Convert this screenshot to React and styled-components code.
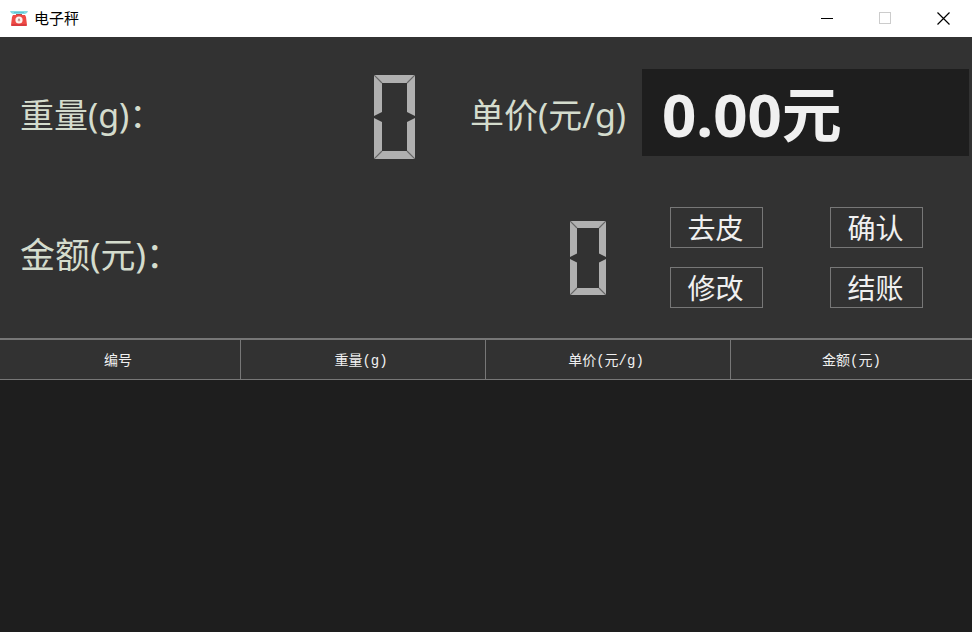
import React from "react";
import styled, { createGlobalStyle } from "styled-components";

const headers = ["编号", "重量(g)", "单价(元/g)", "金额(元)"];

function ScaleIcon() {
  return (
    <svg width="18" height="16" viewBox="0 0 18 16" aria-hidden="true">
      <path d="M0 0h18l-1 2-2 1H3L1 2z" fill="#86dbe4" />
      <path d="M4 1h10v1H4z" fill="#5fc3d2" />
      <path d="M6 3h6v1H6z" fill="#b9474b" />
      <path d="M3 4h12l1 2 1 8q0 1-1 1H2q-1 0-1-1l1-8z" fill="#ee4a45" />
      <path d="M2 13h14l.5 2h-15z" fill="#d93b3e" />
      <circle cx="9" cy="9" r="3.6" fill="#fdf3ef" />
      <circle cx="9" cy="9.3" r="1.2" fill="#e0b0a8" />
      <path d="M9 9.5V7.5" stroke="#7d5a58" strokeWidth="0.8" />
    </svg>
  );
}

// seven segment zero, w/h is the outer size and t the segment thickness
function Zero({ w, h, t }) {
  const mid = h / 2;
  const r = w - t;
  const b = h - t;
  const n = t / 2;
  return (
    <svg width={w} height={h} viewBox={`0 0 ${w} ${h}`} role="img" aria-label="0">
      <g fill="#b0b0b0">
        <path d={`M0 0H${w}L${r} ${t}H${t}Z`} />
        <path d={`M0 ${h}H${w}L${r} ${b}H${t}Z`} />
        <path d={`M0 0L${t} ${t}V${mid - n - 1}L0 ${mid - 1}Z`} />
        <path d={`M0 ${h}L${t} ${b}V${mid + n + 1}L0 ${mid + 1}Z`} />
        <path d={`M${w} 0L${r} ${t}V${mid - n - 1}L${w} ${mid - 1}Z`} />
        <path d={`M${w} ${h}L${r} ${b}V${mid + n + 1}L${w} ${mid + 1}Z`} />
      </g>
      <path
        d={`M0 0L${t} ${t}M${w} 0L${r} ${t}M0 ${h}L${t} ${b}M${w} ${h}L${r} ${b}`}
        stroke="#666"
        strokeWidth="1.2"
      />
    </svg>
  );
}

function App() {
  const [price, setPrice] = React.useState("0.00元");

  return (
    <Window>
      <GlobalStyle />
      <TitleBar>
        <ScaleIcon />
        <Title>电子秤</Title>
        <WindowButton aria-label="最小化">
          <svg width="13" height="13" shapeRendering="crispEdges">
            <path d="M0 6h12v1H0z" fill="#000" />
          </svg>
        </WindowButton>
        <WindowButton aria-label="最大化" disabled>
          <svg width="13" height="13">
            <rect x="0.5" y="0.5" width="11" height="11" fill="none" stroke="#ccc" />
          </svg>
        </WindowButton>
        <WindowButton aria-label="关闭">
          <svg width="13" height="13">
            <path d="M0.5 0.5l12 12M12.5 0.5l-12 12" stroke="#000" strokeWidth="1.2" />
          </svg>
        </WindowButton>
      </TitleBar>

      <Panel>
        <WeightRow>
          <Label>重量(g)：</Label>
          <Readout>
            <Zero w={41} h={84} t={8} />
          </Readout>
          <Label as="label" htmlFor="price">
            单价(元/g)
          </Label>
          <PriceInput
            id="price"
            value={price}
            onChange={(e) => setPrice(e.target.value)}
          />
        </WeightRow>
        <AmountRow>
          <AmountLabel>金额(元)：</AmountLabel>
          <Readout>
            <Zero w={36} h={74} t={7} />
          </Readout>
          <Actions>
            <Button>去皮</Button>
            <Button>确认</Button>
            <Button>修改</Button>
            <Button>结账</Button>
          </Actions>
        </AmountRow>
      </Panel>

      <Table>
        <thead>
          <tr>
            {headers.map((text) => (
              <th key={text} scope="col">
                {text}
              </th>
            ))}
          </tr>
        </thead>
        <tbody></tbody>
      </Table>
    </Window>
  );
}

const GlobalStyle = createGlobalStyle`
  * {
    box-sizing: border-box;
  }

  body {
    margin: 0;
    background: #1e1e1e;
    font-family: "Noto Sans", "Noto Sans CJK SC", sans-serif;
  }

  button, input {
    font-family: inherit;
  }
`;

const Window = styled.div`
  min-height: 100vh;
  background: #1e1e1e;
`;

const TitleBar = styled.header`
  display: flex;
  align-items: center;
  height: 37px;
  padding-left: 10px;
  background: #fff;
`;

const Title = styled.h1`
  flex: 1;
  margin: 0;
  padding: 0 0 2px 6px;
  font-size: 15px;
  font-weight: 400;
  line-height: 20px;
  color: #000;
`;

const WindowButton = styled.button`
  display: flex;
  align-items: center;
  justify-content: center;
  width: 58px;
  height: 36px;
  padding: 0;
  border: none;
  background: none;
`;

const Panel = styled.main`
  display: flex;
  flex-direction: column;
  gap: 42px;
  padding: 32px 0 30px 20px;
  background: #323232;
`;

const WeightRow = styled.div`
  display: flex;
  align-items: center;
  height: 96px;
  padding-right: 3px;
`;

const AmountRow = styled.div`
  display: flex;
  align-items: center;
  padding-right: 49px;
`;

const Label = styled.span`
  padding-bottom: 5px;
  font-size: 34px;
  line-height: 44px;
  white-space: nowrap;
  color: #d4dccd;
`;

const AmountLabel = styled(Label)`
  font-size: 35px;
`;

const Readout = styled.div`
  display: flex;
  flex: 1;
  justify-content: flex-end;
  padding-right: 55px;

  ${AmountRow} & {
    padding-right: 64px;
  }
`;

const PriceInput = styled.input`
  align-self: flex-start;
  flex: 0 0 327px;
  width: 327px;
  height: 87px;
  margin-left: 16px;
  padding: 0 20px 4px;
  border: none;
  background: #1e1e1e;
  color: #f0f0f0;
  font-size: 60px;
  font-weight: 700;
`;

const Actions = styled.div`
  display: grid;
  grid-template-columns: 93px 93px;
  gap: 19px 67px;
`;

const Button = styled.button`
  height: 41px;
  padding: 2px 2px 0 0;
  border: 1px solid #777;
  background: #323232;
  color: #f0f0f0;
  font-size: 28px;
  line-height: 37px;
`;

const Table = styled.table`
  width: 100%;
  table-layout: fixed;
  border-collapse: separate;
  border-spacing: 0;
  border-top: 2px solid #777;

  th {
    height: 40px;
    padding: 0 4px 2px 0;
    border-right: 1px solid #777;
    border-bottom: 1px solid #777;
    background: #323232;
    color: #f0f0f0;
    font-family: "Liberation Mono", "Noto Sans CJK SC", monospace;
    font-size: 14px;
    font-weight: 400;
  }

  th:first-child,
  th:last-child {
    width: 241px;
  }

  th:last-child {
    padding-right: 0;
    border-right: none;
  }
`;

export default App;
